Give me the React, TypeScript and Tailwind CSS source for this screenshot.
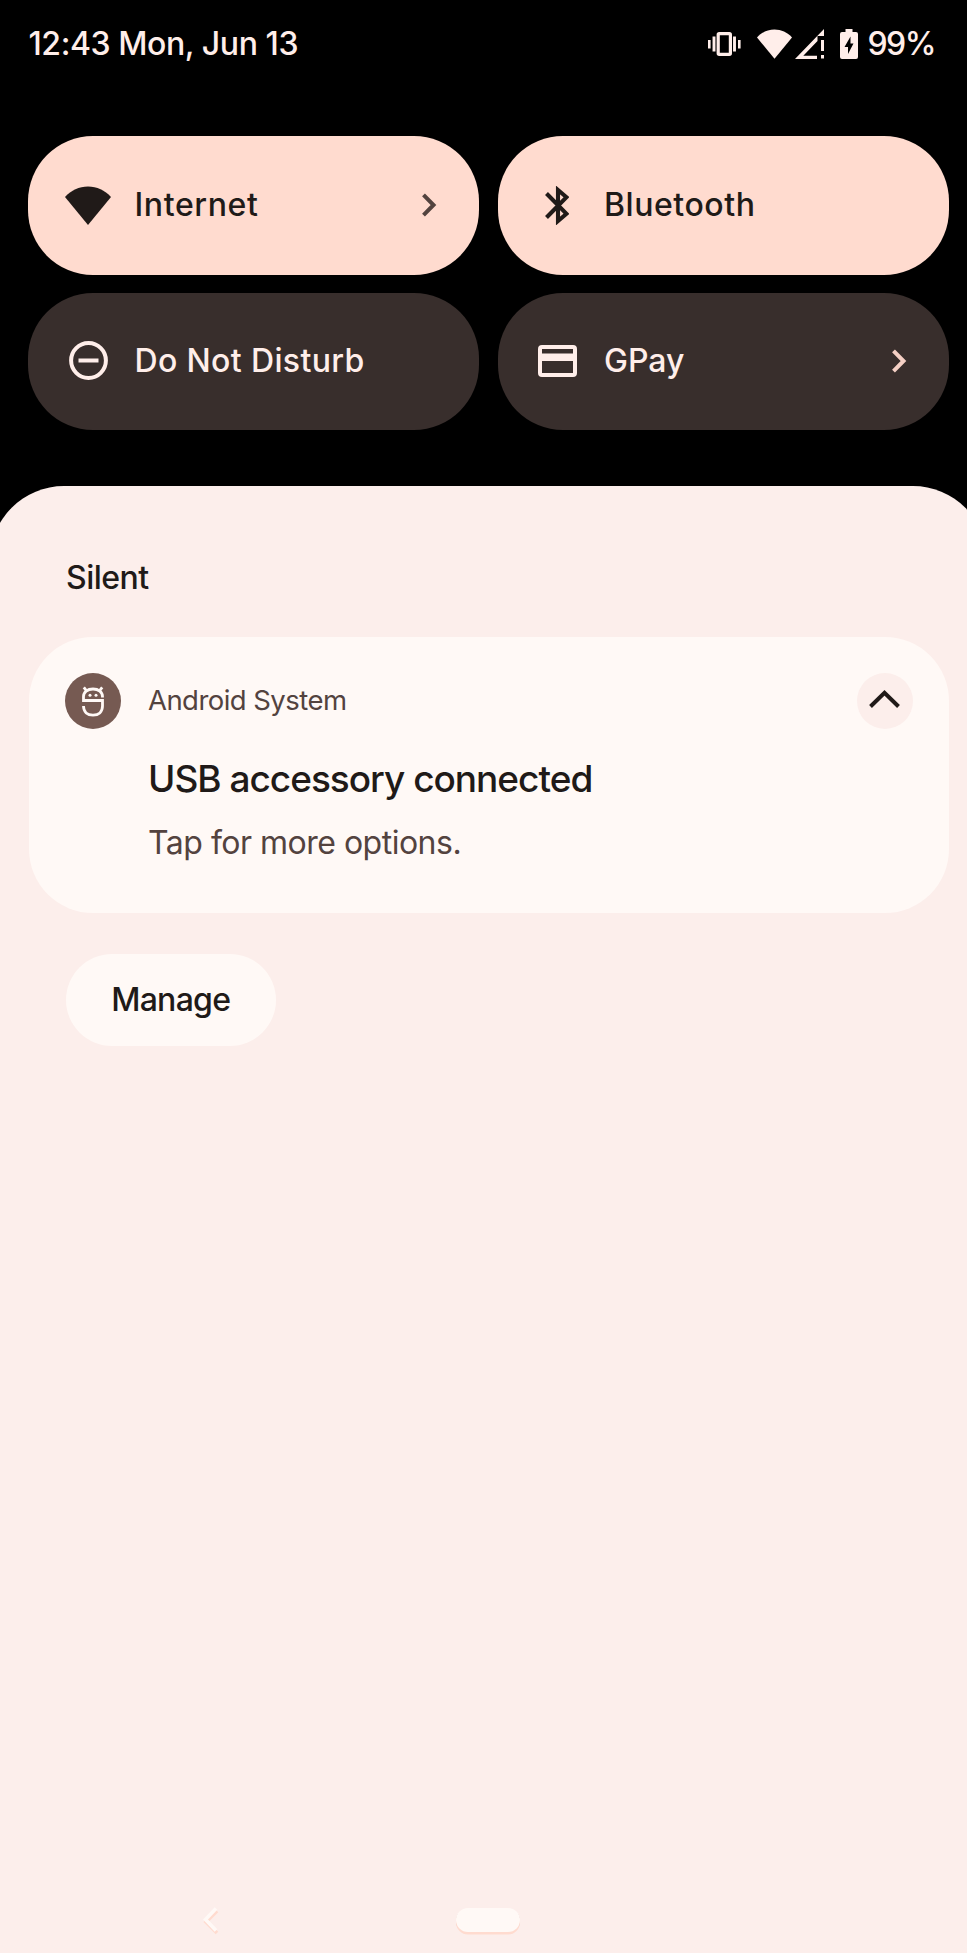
import type { ReactNode } from "react";

function Wifi({ className }: { className: string }) {
  return (
    <svg viewBox="0 0 46 39" className={className} fill="currentColor">
      <path d="M23 39 0 10.900C6.300 4.200 14 .5 23 .5s16.700 3.700 23 10.400z" />
    </svg>
  );
}

function Chevron({ className }: { className: string }) {
  return (
    <svg viewBox="0 0 16 24" className={className} fill="none" stroke="currentColor" strokeWidth="4">
      <path d="M2.500 1.800 12.500 12 2.500 22.200" />
    </svg>
  );
}

function StatusBar() {
  return (
    <header className="flex h-[88px] items-center justify-between pl-[28.5px] pr-[32px] text-[32px] font-medium leading-none text-[#ffeeea]">
      <span className="tracking-[-0.42px]">12:43 Mon, Jun 13</span>
      <div className="flex items-center">
        <svg width="33" height="24" viewBox="0 0 33 24" fill="none" stroke="currentColor">
          <rect x="10.200" y="1.700" width="12.200" height="20.600" rx="1" strokeWidth="3.200" />
          <path d="M6 4.500v15M26.500 4.500v15" strokeWidth="2.900" />
          <path d="M1.300 8v8.500M31.300 8v8.500" strokeWidth="2.600" />
        </svg>
        <Wifi className="ml-[16px] h-[30px] w-[35px]" />
        <svg width="30" height="30" viewBox="0 0 30 30" fill="currentColor" className="ml-[3px]">
          <path d="M29 0v7h-6.500v5L8.300 26.800H22V30H0z" />
          <path d="M26 11h3v11h-3zM26 26h3v3.500h-3z" />
        </svg>
        <svg width="18" height="30" viewBox="0 0 18 30" fill="currentColor" className="ml-[15.5px]">
          <path fillRule="evenodd" d="M5.500 0h7v3H16q2 0 2 2v23q0 2-2 2H2q-2 0-2-2V5q0-2 2-2h3.500zM10.500 7.500 4.500 18H8v7l5.500-10.500H10.500z" />
        </svg>
        <span className="ml-[9px] tracking-[-1.5px]">99%</span>
      </div>
    </header>
  );
}

type TileProps = {
  label: ReactNode;
  icon: ReactNode;
  active?: boolean;
  arrow?: boolean;
};

function Tile({ label, icon, active, arrow }: TileProps) {
  return (
    <button
      className={
        active
          ? "flex items-center rounded-[65px] bg-[#ffdbcf] pl-[36px] pr-[42px] text-[#201a18]"
          : "flex items-center rounded-[65px] bg-[#382e2c] pb-[1.5px] pl-[36px] pr-[42px] text-[#ffeeea]"
      }
    >
      <span className="flex w-[48px] justify-center">{icon}</span>
      <span className="ml-[22.5px] flex-1 text-left text-[32px] font-medium leading-none">{label}</span>
      {arrow && <Chevron className={active ? "h-[24px] w-[16px] text-[#53433f]" : "h-[24px] w-[16px] text-[#f5d0c5]"} />}
    </button>
  );
}

export default function App() {
  return (
    <div className="flex h-[1953px] w-[967px] flex-col overflow-hidden bg-black font-['Inter','Open_Sans',sans-serif]">
      <StatusBar />
      <section className="mt-[48px] ml-[28px] grid w-[920.5px] grid-cols-2 grid-rows-[138.5px_137px] gap-x-[18.5px] gap-y-[18.5px]">
        <Tile
          label={<span className="tracking-[0.62px]">Internet</span>}
          active
          arrow
          icon={<Wifi className="h-[39px] w-[46px]" />}
        />
        <Tile
          label={<span className="tracking-[0.55px]">Bluetooth</span>}
          active
          icon={
            <svg width="24" height="39" viewBox="0 0 24 39" fill="none" stroke="currentColor" strokeWidth="4.1" className="mr-[2px]">
              <path d="M1.500 7.500 21.500 27.800 13 35V4L21.500 11.200 1.500 31.500" />
            </svg>
          }
        />
        <Tile
          label={<span className="tracking-[0.36px]">Do Not Disturb</span>}
          icon={
            <svg width="39" height="39" viewBox="0 0 39 39" fill="none" stroke="currentColor" strokeWidth="4">
              <circle cx="19.500" cy="19.500" r="17.400" />
              <path d="M9.500 19.500h20" />
            </svg>
          }
        />
        <Tile
          label="GPay"
          arrow
          icon={
            <svg width="39" height="32" viewBox="0 0 39 32">
              <rect x="2" y="2" width="35" height="28" rx="2" fill="none" stroke="currentColor" strokeWidth="4" />
              <path d="M2 8.500h35V16H2z" fill="currentColor" />
            </svg>
          }
        />
      </section>

      <main className="mt-[55.5px] -ml-[10px] flex w-[997px] flex-1 flex-col rounded-t-[74px] bg-[#fceeeb] pl-[38.5px] pr-[38.5px] text-[#201a18]">
        <h2 className="mt-[75px] ml-[37.5px] text-[32px] font-medium leading-[34px] tracking-[-0.5px]">Silent</h2>
        <article className="mt-[42px] flex h-[276px] rounded-[64px] bg-[#fff9f6] pt-[36px] pr-[36px] pl-[36.5px]">
          <svg width="56" height="56" viewBox="0 0 56 56" fill="none" stroke="#fff9f6" strokeWidth="2.8">
            <circle cx="28" cy="28" r="28" fill="#765a52" stroke="none" />
            <path d="M37.500 24.500V23.500c0-4.500-4-7.500-9.500-7.500s-9.500 3-9.500 7.500V27.500h19V33c0 6-4 9.200-9.500 9.200s-9.500-3.200-9.500-9.200" />
            <path d="M18.800 14.300l2.800 3.500M37.200 14.300l-2.800 3.500" />
            <circle cx="25" cy="22.300" r="1.500" fill="#fff9f6" stroke="none" />
            <circle cx="31" cy="22.300" r="1.500" fill="#fff9f6" stroke="none" />
          </svg>
          <div className="ml-[27px] flex flex-1 flex-col">
            <div className="flex h-[56px] items-center justify-between text-[27.5px] text-[#53433f]">
              <span className="pt-[1px] tracking-[-0.55px]">Android System</span>
              <span className="flex size-[56px] items-center justify-center rounded-full bg-[#fceeeb]">
                <svg width="31" height="18" viewBox="0 0 31 18" fill="none" stroke="#201a18" strokeWidth="4" className="mb-[4px]">
                  <path d="M1.500 16.500 15.500 2.800 29.500 16.500" />
                </svg>
              </span>
            </div>
            <h3 className="mt-[28px] text-[37px] font-medium leading-[44px] tracking-[-1px]">USB accessory connected</h3>
            <p className="mt-[24px] text-[32px] leading-[36px] tracking-[-0.5px] text-[#53433f]">Tap for more options.</p>
          </div>
        </article>
        <button className="mt-[41px] ml-[37px] h-[92px] w-[210.5px] rounded-[46px] bg-[#fff9f6] text-[32px] font-medium tracking-[-0.7px]">
          Manage
        </button>
        <nav className="mt-auto mb-[16.5px] flex items-start">
          <svg width="16" height="30" viewBox="0 0 16 30" fill="none" strokeWidth="3.6" className="ml-[174px]">
            <path d="M14 4 3 15 14 26" stroke="#ffdbcf" />
            <path d="M13 1.500 2.500 12.500 13 23.500" stroke="#fff9f6" />
          </svg>
          <span className="ml-[237.5px] mt-[1px] h-[24px] w-[64px] rounded-full bg-[#fff9f6] shadow-[0_2.5px_0.5px_#ffdbcf,0_1px_0_#c9a79d]" />
        </nav>
      </main>
    </div>
  );
}
